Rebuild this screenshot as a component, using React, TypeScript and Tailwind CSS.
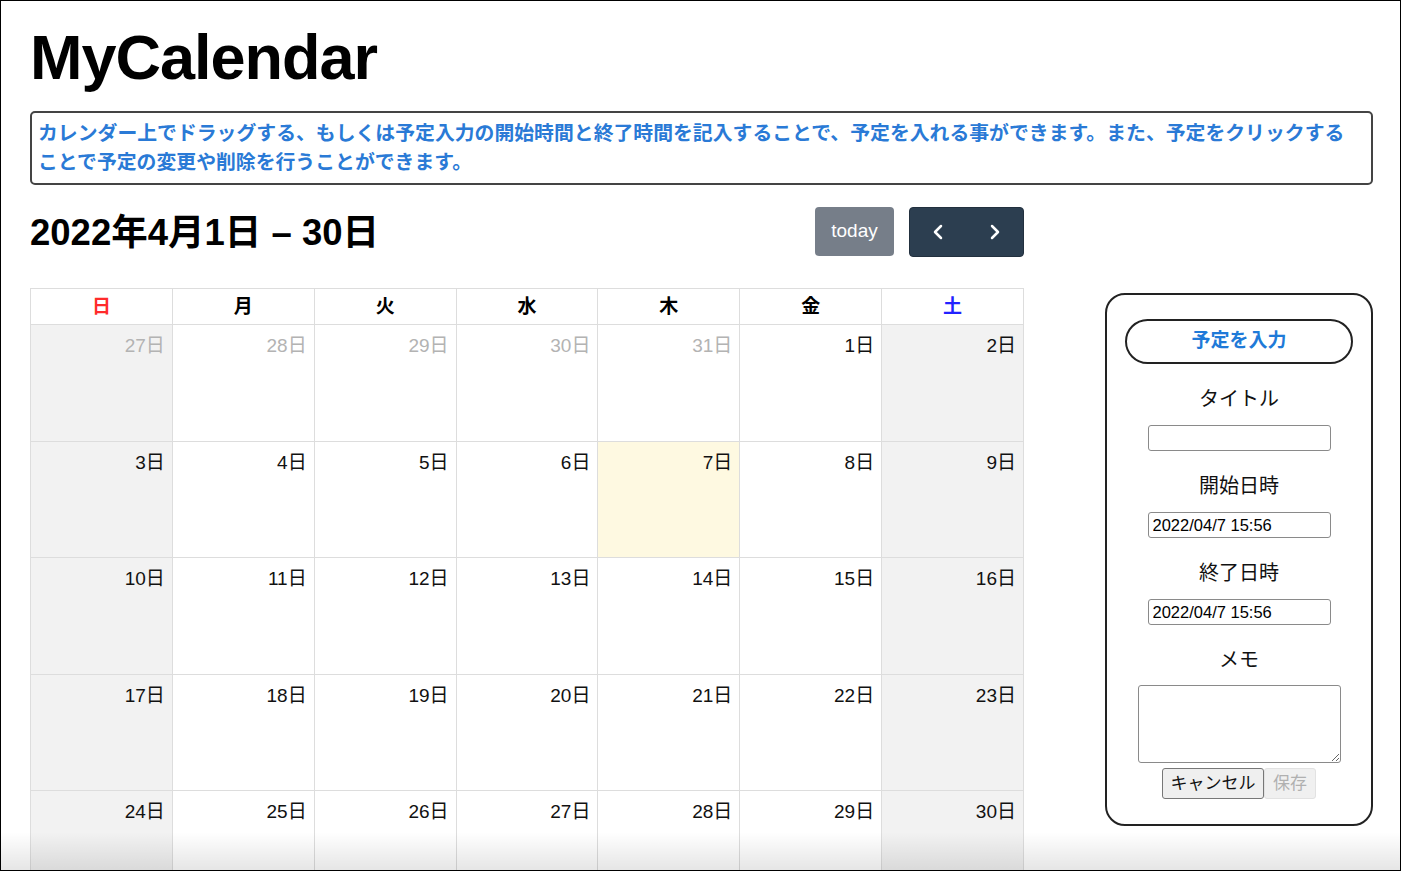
import { ChevronLeft, ChevronRight } from 'lucide-react'

const weekDays = ['日', '月', '火', '水', '木', '金', '土']

interface DayCell {
  day: number
  current: boolean
}

// April 2022, starting from Sunday March 27
const buildWeeks = (): DayCell[][] => {
  const cells: DayCell[] = []
  for (let d = 27; d <= 31; d++) cells.push({ day: d, current: false })
  for (let d = 1; d <= 30; d++) cells.push({ day: d, current: true })
  const weeks: DayCell[][] = []
  for (let i = 0; i < cells.length; i += 7) weeks.push(cells.slice(i, i + 7))
  return weeks
}

function Calendar() {
  const weeks = buildWeeks()

  return (
    <div className="w-[994px] border-l border-t border-[#dddddd]">
      {/* Header */}
      <div className="grid grid-cols-7">
        {weekDays.map((w, i) => (
          <div
            key={w}
            className={`h-[36px] pt-[2px] flex items-center justify-center border-r border-b border-[#dddddd] text-[19px] font-bold ${
              i === 0 ? 'text-[#ff2b2b]' : i === 6 ? 'text-[#2222ff]' : 'text-black'
            }`}
          >
            {w}
          </div>
        ))}
      </div>

      {/* Weeks */}
      {weeks.map((week, wi) => (
        <div key={wi} className="grid grid-cols-7">
          {week.map((cell, ci) => {
            const isToday = cell.current && cell.day === 7
            const weekend = ci === 0 || ci === 6
            return (
              <div
                key={ci}
                className={`h-[116.5px] border-r border-b border-[#dddddd] pr-[7px] pt-[8px] text-right ${
                  isToday ? 'bg-[#fef9e1]' : weekend ? 'bg-[#f2f2f2]' : 'bg-white'
                }`}
              >
                <span className={`text-[19px] leading-[26px] ${cell.current ? 'text-[#111111]' : 'text-[#b3b3b3]'}`}>
                  {cell.day}日
                </span>
              </div>
            )
          })}
        </div>
      ))}
    </div>
  )
}

function EventPanel() {
  return (
    <div className="w-[268px] h-[533px] border-2 border-[#222222] rounded-[20px] flex flex-col items-center pt-[24px]">
      <button className="w-[228px] h-[45px] border-2 border-[#222222] rounded-full text-[19px] font-semibold text-[#1f7ad8] bg-white">
        予定を入力
      </button>

      <div className="mt-[21px] text-[20px] leading-[28px] text-[#111111]">タイトル</div>
      <input
        type="text"
        className="mt-[12px] w-[183px] h-[26px] border border-[#8a8a8a] rounded-[3px] px-[4px] text-[16.5px] bg-white"
        defaultValue=""
      />

      <div className="mt-[21px] text-[20px] leading-[28px] text-[#111111]">開始日時</div>
      <input
        type="text"
        className="mt-[12px] w-[183px] h-[26px] border border-[#8a8a8a] rounded-[3px] px-[4px] text-[16.5px] text-black bg-white"
        defaultValue="2022/04/7 15:56"
      />

      <div className="mt-[21px] text-[20px] leading-[28px] text-[#111111]">終了日時</div>
      <input
        type="text"
        className="mt-[12px] w-[183px] h-[26px] border border-[#8a8a8a] rounded-[3px] px-[4px] text-[16.5px] text-black bg-white"
        defaultValue="2022/04/7 15:56"
      />

      <div className="mt-[21px] text-[20px] leading-[28px] text-[#111111]">メモ</div>
      <textarea className="mt-[11px] w-[203px] h-[78px] border border-[#8a8a8a] rounded-[3px] bg-white block" />

      <div className="mt-[5px] flex">
        <button className="w-[102px] h-[31px] border border-[#777777] rounded-[3px] bg-[#efefef] text-[17px] text-[#111111]">
          キャンセル
        </button>
        <button
          disabled
          className="w-[52px] h-[31px] border border-[#e2e2e2] rounded-[3px] bg-[#f0f0f0] text-[17px] text-[#b0b0b0]"
        >
          保存
        </button>
      </div>
    </div>
  )
}

export default function App() {
  return (
    <div className="relative w-[1401px] h-[871px] overflow-hidden border border-black bg-white font-['Liberation_Sans','Noto_Sans_CJK_JP',sans-serif]">
      <div className="pl-[29px] pr-[27px]">
        <h1 className="mt-[21px] text-[63px] leading-[70px] font-bold tracking-[-1px] text-black">MyCalendar</h1>

        {/* Description */}
        <div className="mt-[19px] border-2 border-[#444444] rounded-[5px] px-[6px] py-[6px] text-[19.85px] leading-[29px] font-semibold text-[#2a7ad6]">
          カレンダー上でドラッグする、もしくは予定入力の開始時間と終了時間を記入することで、予定を入れる事ができます。また、予定をクリックする
          <br />
          ことで予定の変更や削除を行うことができます。
        </div>

        <div className="flex">
          <div>
            {/* Toolbar */}
            <div className="mt-[21px] w-[994px] flex items-center justify-between">
              <h2 className="pt-[2px] text-[36.5px] leading-[49px] font-bold text-black">2022年4月1日 – 30日</h2>
              <div className="flex items-center gap-[15px]">
                <button
                  disabled
                  className="w-[79px] h-[49px] rounded-[4px] bg-[#767e89] text-[19px] text-white"
                >
                  today
                </button>
                <div className="flex w-[115px] h-[50px] rounded-[4px] bg-[#2c3e50] border border-[#22303e]">
                  <button className="flex-1 flex items-center justify-center text-white">
                    <ChevronLeft className="w-[24px] h-[24px]" strokeWidth={2.5} />
                  </button>
                  <button className="flex-1 flex items-center justify-center text-white">
                    <ChevronRight className="w-[24px] h-[24px]" strokeWidth={2.5} />
                  </button>
                </div>
              </div>
            </div>

            <div className="mt-[31px]">
              <Calendar />
            </div>
          </div>

          <div className="ml-[81px] mt-[108px]">
            <EventPanel />
          </div>
        </div>
      </div>

      {/* bottom window shade */}
      <div className="pointer-events-none absolute left-0 right-0 bottom-0 h-[38px] bg-linear-to-b from-transparent to-black/10" />
    </div>
  )
}
